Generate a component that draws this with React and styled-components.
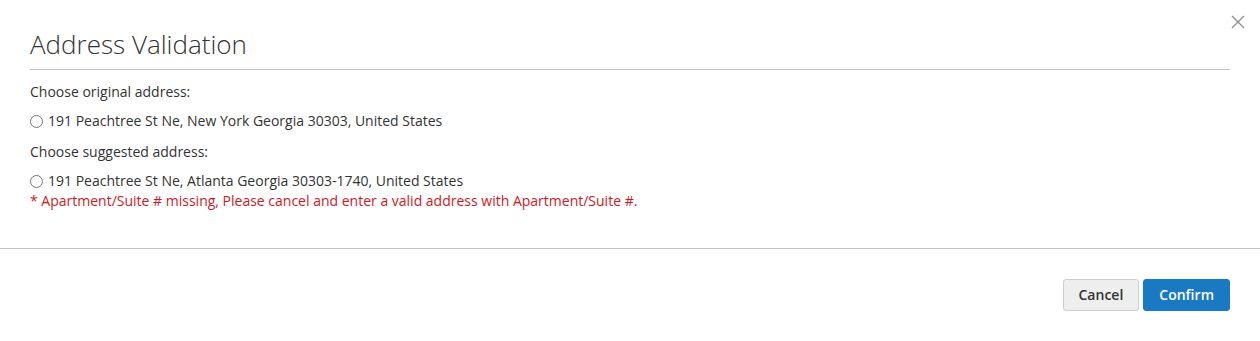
import React from 'react';
import styled, { createGlobalStyle } from 'styled-components';

const Global = createGlobalStyle`
  html, body { margin: 0; padding: 0; background: #fff; }
  body { font-family: "Open Sans", "Liberation Sans", sans-serif; color: #333; font-size: 14px; line-height: 20px; }
`;

const Modal = styled.div`
  position: relative;
  width: 1260px;
  height: 341px;
  background: #fff;
`;

const Header = styled.header`
  margin: 0 30px;
  padding-top: 30px;
  padding-bottom: 10px;
  border-bottom: 1px solid #c1c1c1;
`;

const Title = styled.h1`
  margin: 0;
  font-size: 26px;
  font-weight: 300;
  line-height: 29px;
  color: #333;
`;

const Close = styled.button`
  position: absolute;
  top: 10px;
  right: 10px;
  width: 24px;
  height: 24px;
  padding: 0;
  border: 0;
  background: none;
  display: flex;
  align-items: center;
  justify-content: center;
  cursor: pointer;
`;

const Content = styled.div`
  padding: 12px 30px 37px;
`;

const Label = styled.p`
  margin: 0 0 9px;
`;

const Option = styled.label`
  display: flex;
  align-items: center;
  margin-bottom: ${p => (p.$tight ? '0' : '11px')};
  input {
    margin: 0 5px 0 0;
    width: 13px;
    height: 13px;
  }
`;

const Error = styled.div`
  color: #d0181f;
`;

const Footer = styled.footer`
  border-top: 1px solid #c1c1c1;
  padding: 30px 30px 0;
  display: flex;
  justify-content: flex-end;
  gap: 4px;
`;

const Button = styled.button`
  font-family: "Open Sans", "Liberation Sans", sans-serif;
  font-size: 14px;
  font-weight: 600;
  line-height: 16px;
  padding: 7px 15px;
  border-radius: 3px;
  border: 1px solid ${p => (p.$primary ? '#1979c3' : '#cdcdcd')};
  background: ${p => (p.$primary ? '#1979c3' : '#eee')};
  color: ${p => (p.$primary ? '#fff' : '#333')};
  cursor: pointer;
`;

export default function App() {
  return (
    <Modal>
      <Global />
      <Close aria-label="Close">
        <svg width="14" height="14" viewBox="0 0 14 14">
          <path d="M1 1L13 13M13 1L1 13" stroke="#8f8f8f" strokeWidth="1.4" />
        </svg>
      </Close>
      <Header>
        <Title>Address Validation</Title>
      </Header>
      <Content>
        <Label>Choose original address:</Label>
        <Option>
          <input type="radio" name="addr" />
          191 Peachtree St Ne, New York Georgia 30303, United States
        </Option>
        <Label>Choose suggested address:</Label>
        <Option $tight>
          <input type="radio" name="addr" />
          191 Peachtree St Ne, Atlanta Georgia 30303-1740, United States
        </Option>
        <Error>* Apartment/Suite # missing, Please cancel and enter a valid address with Apartment/Suite #.</Error>
      </Content>
      <Footer>
        <Button>Cancel</Button>
        <Button $primary>Confirm</Button>
      </Footer>
    </Modal>
  );
}
